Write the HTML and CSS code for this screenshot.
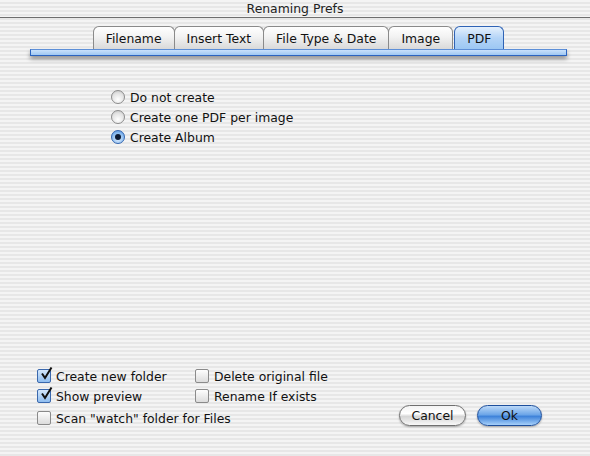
FILE: index.html
```html
<!DOCTYPE html>
<html lang="en">
<head>
    <meta charset="UTF-8">
    <title>Renaming Prefs</title>
    <link rel="stylesheet" href="styles.css">
</head>
<body>
    <div class="window">
        <div class="titlebar">Renaming Prefs</div>
        <div class="tabs">
            <div class="tab">Filename</div>
            <div class="tab">Insert Text</div>
            <div class="tab">File Type &amp; Date</div>
            <div class="tab">Image</div>
            <div class="tab active">PDF</div>
        </div>
        <div class="tabbar"></div>
        <div class="options">
            <label class="opt"><span class="radio"></span>Do not create</label>
            <label class="opt"><span class="radio"></span>Create one PDF per image</label>
            <label class="opt"><span class="radio on"></span>Create Album</label>
        </div>
        <div class="footer">
            <div class="checks">
                <label class="chk"><span class="box on"><svg viewBox="0 0 14 14"><path d="M3 6.5 L6 11 L12.5 0.5" fill="none" stroke="#111" stroke-width="2"/></svg></span>Create new folder</label>
                <label class="chk"><span class="box"></span>Delete original file</label>
                <label class="chk"><span class="box on"><svg viewBox="0 0 14 14"><path d="M3 6.5 L6 11 L12.5 0.5" fill="none" stroke="#111" stroke-width="2"/></svg></span>Show preview</label>
                <label class="chk"><span class="box"></span>Rename If exists</label>
                <label class="chk wide"><span class="box"></span>Scan "watch" folder for Files</label>
            </div>
            <div class="buttons">
                <button class="btn">Cancel</button>
                <button class="btn default">Ok</button>
            </div>
        </div>
    </div>
</body>
</html>
```

FILE: styles.css
```css
body {
    margin: 0;
    font-family: 'DejaVu Sans', sans-serif;
    font-size: 12.4px;
    color: #111;
}
.window {
    width: 590px;
    height: 456px;
    display: flex;
    flex-direction: column;
    background: repeating-linear-gradient(#f4f4f4 0, #f4f4f4 2px, #e7e7e7 2px, #e7e7e7 4px);
}
.titlebar {
    height: 17px;
    line-height: 18px;
    text-align: center;
    color: #222;
    border-bottom: 1px solid #6e6e6e;
}
.tabs {
    display: flex;
    justify-content: center;
    margin-top: 8px;
    padding-left: 6px;
    position: relative;
    z-index: 1;
}
.tab {
    height: 22px;
    line-height: 24px;
    padding: 0 12px;
    border: 1px solid #8a8a8a;
    border-bottom: none;
    border-radius: 6px 6px 0 0;
    background: linear-gradient(#ffffff, #f2f2f2 45%, #d9d9d9);
    margin-right: -1px;
    color: #111;
}
.tab.active {
    background: linear-gradient(#e6f1fd, #b4d4f7 50%, #9cc7f3);
    border-color: #2f63b5;
    margin-left: 2px;
}
.tabbar {
    height: 5px;
    margin: 0 23px 0 30px;
    border: 1px solid #2b64c0;
    border-top-color: #5d8fd8;
    background: linear-gradient(#c9e1fb, #9fc8f3);
    box-shadow: 0 3px 4px rgba(0, 0, 0, 0.4);
}
.options {
    display: flex;
    flex-direction: column;
    padding: 31px 0 0 111px;
    flex: 1;
}
.opt, .chk {
    display: flex;
    align-items: center;
    height: 20px;
    white-space: nowrap;
}
.radio {
    width: 12px;
    height: 12px;
    border: 1px solid #8c8c8c;
    border-radius: 50%;
    margin-right: 5px;
    background: radial-gradient(circle at 50% 70%, #ffffff, #e2e2e2 60%, #bdbdbd);
    position: relative;
}
.radio.on {
    border-color: #3466b0;
    background: radial-gradient(circle at 50% 70%, #d8eafd, #8bbcf0 60%, #4b87d6);
}
.radio.on::after {
    content: "";
    position: absolute;
    left: 3px;
    top: 3px;
    width: 6px;
    height: 6px;
    border-radius: 50%;
    background: #0c1a33;
}
.footer {
    display: flex;
    align-items: flex-end;
    padding: 0 48px 28px 37px;
}
.checks {
    display: grid;
    grid-template-columns: 158px auto;
    grid-template-rows: 20px 20px 22px;
    flex: 1;
}
.chk.wide {
    grid-column: 1 / 3;
    height: 22px;
    padding-top: 2px;
    box-sizing: border-box;
}
.box {
    width: 12px;
    height: 12px;
    border: 1px solid #8a8a8a;
    border-radius: 2px;
    margin-right: 5px;
    background: linear-gradient(#fdfdfd, #dcdcdc);
    position: relative;
}
.box.on {
    border-color: #3a68ad;
    background: linear-gradient(#d4e7fc, #8fbdf0);
}
.box svg {
    position: absolute;
    left: 1px;
    top: -3px;
    width: 14px;
    height: 14px;
}
.buttons {
    display: flex;
    gap: 11px;
    margin-bottom: 2px;
}
.btn {
    font-family: 'DejaVu Sans', sans-serif;
    font-size: 12.4px;
    width: 67px;
    height: 21px;
    padding: 0;
    border: 1px solid #6f6f6f;
    border-radius: 11px;
    background: linear-gradient(#f4f4f4, #ffffff 40%, #d6d6d6 55%, #f8f8f8);
    box-shadow: 0 1px 2px rgba(0, 0, 0, 0.3);
    color: #111;
}
.btn.default {
    width: 65px;
    border-color: #1e4f9c;
    background: linear-gradient(#bcd9f8, #6da6e8 45%, #3f83da 55%, #a6d0fa);
}
```
